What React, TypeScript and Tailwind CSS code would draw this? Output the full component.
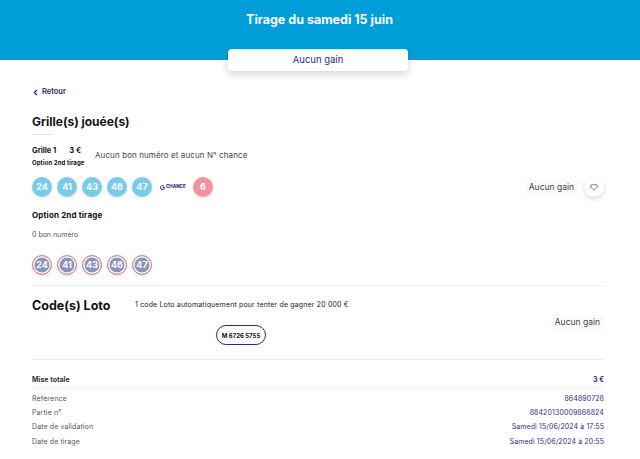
import { ChevronLeft, Heart } from "lucide-react"

const numbers = [24, 41, 43, 46, 47]

const details = [
  { label: "Référence", value: "864890728" },
  { label: "Partie n°", value: "88420130009866824" },
  { label: "Date de validation", value: "Samedi 15/06/2024 à 17:55" },
  { label: "Date de tirage", value: "Samedi 15/06/2024 à 20:55" },
]

const Ball = ({ value, className }: { value: number; className: string }) => (
  <div className={`flex h-5 w-5 items-center justify-center rounded-full text-[9px] font-bold text-white ${className}`}>
    {value}
  </div>
)

const NoGain = ({ className }: { className: string }) => (
  <div className={`flex h-[15px] items-center rounded-sm bg-[#fafafa] px-[4px] text-[8.5px] text-[#444] ${className}`}>
    Aucun gain
  </div>
)

export default function App() {
  return (
    <div className="h-[459px] w-[640px] overflow-hidden bg-white font-['Inter','Liberation_Sans',sans-serif]">
      <header className="flex h-[60px] justify-center bg-[#009ed8] pt-[12px]">
        <h1 className="-ml-[1px] text-[12.5px] leading-4 font-bold text-white">Tirage du samedi 15 juin</h1>
      </header>

      <div className="relative -mt-[11px] ml-[228px] flex h-[22px] w-[180px] items-center justify-center rounded-[4px] bg-white text-[9.5px] font-normal text-[#2a2a86] shadow-[0_3px_8px_rgba(0,0,0,0.18)]">
        Aucun gain
      </div>

      <main className="pr-[36px] pl-[32px]">
        <a className="mt-[15px] flex items-center gap-[2px] text-[7.5px] leading-[12px] font-semibold text-[#1f1f7a]">
          <ChevronLeft size={9} strokeWidth={3} className="-ml-[1px]" />
          Retour
        </a>

        <h2 className="mt-[16px] text-[12px] leading-[16px] font-bold text-[#111]">Grille(s) jouée(s)</h2>
        <div className="mt-[4px] h-px w-5 bg-[#e5e5e5]" />

        <div className="mt-[11px] flex items-center gap-[10px]">
          <div className="w-[53px]">
            <div className="flex gap-[13px] text-[7.5px] leading-[10px] font-bold text-[#111]">
              <span>Grille 1</span>
              <span>3 €</span>
            </div>
            <div className="mt-[3px] text-[6px] leading-[8px] font-bold tracking-[0.1px] whitespace-nowrap text-[#111]">Option 2nd tirage</div>
          </div>
          <p className="-mt-[3px] text-[8px] tracking-[0.1px] text-[#444]">Aucun bon numéro et aucun N° chance</p>
        </div>

        <div className="mt-[10px] flex items-center">
          <div className="flex gap-[5px]">
            {numbers.map((n) => (
              <Ball key={n} value={n} className="bg-[#79cbea] shadow-[0_2px_4px_rgba(0,0,0,0.08)]" />
            ))}
          </div>
          <div className="ml-[8px] flex w-[25px] items-center gap-px">
            <svg width="5" height="5" viewBox="0 0 10 10" className="shrink-0">
              <path d="M8 2.5A4 4 0 1 0 9 5H5.5" fill="none" stroke="#1f2a80" strokeWidth="2" />
            </svg>
            <span className="text-[4.5px] font-extrabold whitespace-nowrap text-[#1f2a80]">CHANCE</span>
          </div>
          <Ball value={6} className="ml-[8px] bg-[#f2929e] shadow-[0_2px_4px_rgba(0,0,0,0.08)]" />
          <NoGain className="mr-[6px] ml-auto" />
          <div className="flex h-5 w-5 items-center justify-center rounded-full bg-white shadow-[0_2px_5px_rgba(0,0,0,0.15)]">
            <Heart size={8} strokeWidth={2} className="text-[#3a3a8c]" />
          </div>
        </div>

        <h3 className="mt-[12px] text-[8px] leading-[12px] font-bold tracking-[0.15px] text-[#111]">Option 2nd tirage</h3>
        <p className="mt-[9px] text-[7px] leading-[10px] text-[#555]">0 bon numéro</p>

        <div className="mt-[15px] flex gap-[5px]">
          {numbers.map((n) => (
            <Ball
              key={n}
              value={n}
              className="border border-[#e57f8c] bg-[#8b94bd] shadow-[inset_0_0_0_1.5px_white,0_2px_4px_rgba(0,0,0,0.08)]"
            />
          ))}
        </div>

        <div className="mt-[10px] h-px bg-[#ececec]" />

        <section className="flex h-[73px]">
          <h2 className="mt-[10px] w-[103px] text-[12.5px] leading-[20px] font-bold text-[#111]">Code(s) Loto</h2>
          <div className="mt-[14px] flex flex-col">
            <p className="text-[7px] leading-[10px] tracking-[0.16px] whitespace-nowrap text-[#222]">
              1 code Loto automatiquement pour tenter de gagner 20 000 €
            </p>
            <div className="mt-[15px] ml-[81px] flex h-5 w-[50px] items-center justify-center rounded-full border border-[#2a2a7c] text-[6px] font-bold text-[#111]">
              M 6726 5755
            </div>
          </div>
          <NoGain className="mt-[29px] ml-auto" />
        </section>

        <div className="h-px bg-[#ececec]" />

        <div className="mt-[15px] flex items-center justify-between pb-[3px] text-[7px] leading-[10px] font-bold">
          <span className="text-[#333]">Mise totale</span>
          <span className="text-[#2a2a7c]">3 €</span>
        </div>
        <div className="h-px bg-[#f3f3f3]" />

        <dl className="mt-[3px] flex flex-col">
          {details.map((d) => (
            <div key={d.label} className="flex h-[14.3px] items-center justify-between text-[7px] tracking-[0.1px]">
              <dt className="text-[#555]">{d.label}</dt>
              <dd className="text-[#2f2f80]">{d.value}</dd>
            </div>
          ))}
        </dl>
      </main>
    </div>
  )
}
